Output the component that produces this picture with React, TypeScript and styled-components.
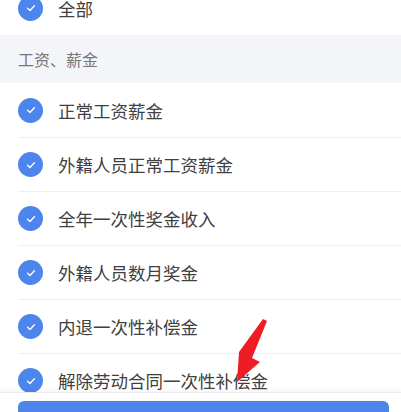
import React from 'react';
import styled, { createGlobalStyle } from 'styled-components';

const GlobalStyle = createGlobalStyle`
  html, body {
    margin: 0;
    padding: 0;
    background: #fff;
    overflow: hidden;
  }
  body {
    font-family: "Noto Sans CJK SC", "Noto Sans", sans-serif;
  }
`;

interface Group {
  title?: string;
  items: string[];
}

const groups: Group[] = [
  { items: ['全部'] },
  {
    title: '工资、薪金',
    items: [
      '正常工资薪金',
      '外籍人员正常工资薪金',
      '全年一次性奖金收入',
      '外籍人员数月奖金',
      '内退一次性补偿金',
      '解除劳动合同一次性补偿金',
    ],
  },
];

function CheckIcon() {
  return (
    <Check>
      <svg width="12" height="12" viewBox="0 0 12 12">
        <path d="M2.6 6.2 L5 8.4 L9.4 3.8" fill="none" stroke="#fff" strokeWidth="1.4" strokeLinecap="round" strokeLinejoin="round" />
      </svg>
    </Check>
  );
}

function App() {
  return (
    <Page>
      <GlobalStyle />
      <Scroller>
        <List>
          {groups.map((group, gi) => (
            <React.Fragment key={gi}>
              {group.title && <SectionTitle>{group.title}</SectionTitle>}
              {group.items.map((item, i) => (
                <Row key={item} $first={i === 0}>
                  <CheckIcon />
                  <Label>{item}</Label>
                </Row>
              ))}
            </React.Fragment>
          ))}
        </List>
      </Scroller>
      <Footer>
        <ConfirmButton aria-label="确定" />
      </Footer>
      <Annotation width="401" height="412" viewBox="0 0 401 412">
        <polygon points="263,319 267,321 252,358 260,362 237,382 239,352" fill="#ee1c25" />
      </Annotation>
    </Page>
  );
}

export default App;

const Page = styled.div`
  position: relative;
  width: 401px;
  height: 412px;
  display: flex;
  flex-direction: column;
  overflow: hidden;
  background: #fff;
`;

const Scroller = styled.div`
  flex: 1;
  overflow: hidden;
`;

const List = styled.div`
  margin-top: -19px;
  display: flex;
  flex-direction: column;
`;

const SectionTitle = styled.div`
  height: 48px;
  display: flex;
  align-items: center;
  padding-left: 18px;
  background: #f4f5f8;
  color: #777;
  font-size: 16px;
`;

const Row = styled.div<{ $first: boolean }>`
  margin-left: 18px;
  display: flex;
  align-items: center;
  gap: 15px;
  border-top: ${(p) => (p.$first ? 'none' : '1px solid #eeeff2')};
  height: ${(p) => (p.$first ? '54px' : '53px')};
`;

const Check = styled.span`
  width: 25px;
  height: 25px;
  border-radius: 50%;
  background: #4c86ec;
  display: flex;
  align-items: center;
  justify-content: center;
  flex-shrink: 0;
`;

const Label = styled.span`
  font-size: 17.5px;
  color: #404040;
  white-space: nowrap;
`;

const Footer = styled.div`
  height: 20px;
  flex-shrink: 0;
  padding: 8px 12px 0 18px;
  box-sizing: border-box;
  background: #fff;
  border-top: 1px solid #ececee;
  box-shadow: 0 -2px 4px rgba(0, 0, 0, 0.04);
  overflow: hidden;
  position: relative;
`;

const ConfirmButton = styled.button`
  display: block;
  width: 100%;
  height: 44px;
  border: none;
  border-radius: 6px;
  background: #4d86e8;
`;

const Annotation = styled.svg`
  position: absolute;
  left: 0;
  top: 0;
  pointer-events: none;
`;
